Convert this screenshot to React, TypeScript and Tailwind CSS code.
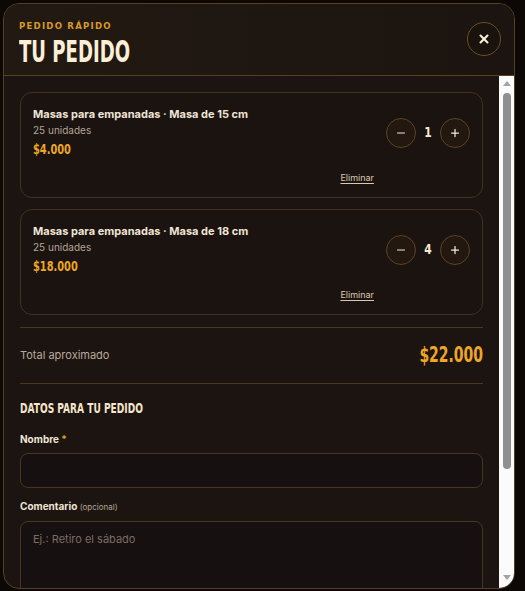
import { Minus, Plus, X } from 'lucide-react';

type CartItem = {
    id: number;
    name: string;
    units: string;
    price: string;
    qty: number;
};

const items: CartItem[] = [
    { id: 1, name: 'Masas para empanadas · Masa de 15 cm', units: '25 unidades', price: '$4.000', qty: 1 },
    { id: 2, name: 'Masas para empanadas · Masa de 18 cm', units: '25 unidades', price: '$18.000', qty: 4 },
];

const display = "font-['DejaVu_Sans_Condensed','DejaVu_Sans',sans-serif] font-bold";

function QtyButton({ children }: { children: React.ReactNode }) {
    return (
        <button className="flex h-[30px] w-[30px] items-center justify-center rounded-full border border-[#5e4424] bg-[#22180f] text-[#f6e9d4]">
            {children}
        </button>
    );
}

// classic browser scrollbar, as it shows in the screenshot
function Scrollbar() {
    return (
        <div className="flex w-[15px] shrink-0 flex-col items-center bg-[#fbfbfb]">
            <svg width="8" height="15" viewBox="0 0 8 15" className="shrink-0">
                <path d="M0 10 L4 5 L8 10 Z" fill="#a3a3a3" />
            </svg>
            <div className="mt-[2px] h-[376px] w-[8px] rounded-full bg-[#8f8f8f]" />
            <div className="flex-1" />
            <svg width="8" height="15" viewBox="0 0 8 15" className="mb-[2px] shrink-0">
                <path d="M0 4 L8 4 L4 9 Z" fill="#a3a3a3" />
            </svg>
        </div>
    );
}

function ItemCard({ item }: { item: CartItem }) {
    return (
        <div className="rounded-xl border border-[#44321e] bg-[#1b130f] px-3 pt-[13px] pb-[13px]">
            <div className="flex items-center justify-between">
                <div>
                    <p className="text-[11px] leading-4 font-bold text-[#efe4d6]">{item.name}</p>
                    <p className="mt-px text-[10px] leading-[14px] text-[#b3a596]">{item.units}</p>
                    <p className={`${display} mt-[2px] origin-left scale-x-[0.78] text-[14px] leading-5 text-[#eda626]`}>
                        {item.price}
                    </p>
                </div>
                <div className="flex items-center">
                    <QtyButton>
                        <Minus className="h-3 w-3" strokeWidth={2} />
                    </QtyButton>
                    <span className={`${display} w-6 origin-center scale-x-[0.85] text-center text-[14px] text-[#f6e9d4]`}>
                        {item.qty}
                    </span>
                    <QtyButton>
                        <Plus className="h-3 w-3" strokeWidth={2.5} />
                    </QtyButton>
                </div>
            </div>
            <div className="mt-[13px] flex justify-end pr-[96px]">
                <button className="text-[9px] leading-3 text-[#d9c9b2] underline underline-offset-2">Eliminar</button>
            </div>
        </div>
    );
}

export default function App() {
    return (
        <div className="h-[591px] w-[525px] overflow-hidden bg-[#0b0806] pt-[3px] pl-[3px] font-['Inter','Noto_Sans',sans-serif]">
            <div className="flex h-[586px] w-[512px] flex-col overflow-hidden rounded-2xl border border-[#58401f] bg-[#1c1410]">
                <header className="flex h-[72px] shrink-0 items-start justify-between border-b border-[#58401f] bg-gradient-to-r from-[#221912] to-[#1c1410] pr-[13px] pl-[15px]">
                    <div className="pt-[16px]">
                        <p className={`${display} text-[9.5px] leading-3 tracking-[0.13em] text-[#d99a2b]`}>PEDIDO RÁPIDO</p>
                        <h1 className={`${display} mt-[4px] origin-left scale-x-[0.67] text-[30px] leading-8 text-[#fbefd8]`}>
                            TU PEDIDO
                        </h1>
                    </div>
                    <button className="mt-[18px] flex h-[34px] w-[34px] items-center justify-center rounded-full border border-[#6b4e29] bg-[#1a120d] text-[#fbefd8]">
                        <X className="h-3.5 w-3.5" strokeWidth={3.5} />
                    </button>
                </header>

                <div className="flex min-h-0 flex-1">
                    <div className="min-w-0 flex-1 overflow-hidden px-4 pt-4">
                        <div className="space-y-[11px]">
                            {items.map((item) => (
                                <ItemCard key={item.id} item={item} />
                            ))}
                        </div>

                        <div className="mt-3 flex h-[57px] items-center justify-between border-y border-[#4c3820]">
                            <span className="text-[11px] text-[#b8aa9b]">Total aproximado</span>
                            <span className={`${display} origin-right scale-x-[0.74] text-[21px] text-[#eda626]`}>$22.000</span>
                        </div>

                        <h2 className={`${display} mt-[14px] origin-left scale-x-[0.72] text-[14px] leading-5 text-[#f6e6cc]`}>
                            DATOS PARA TU PEDIDO
                        </h2>

                        <label className="mt-[15px] block text-[10px] leading-3 font-bold text-[#efe4d6]">
                            Nombre <span className="text-[#e0a030]">*</span>
                        </label>
                        <input className="mt-2 h-[35px] w-full rounded-lg border border-[#4a3620] bg-[#171010] px-3 text-[11px] text-[#efe4d6] outline-none" />

                        <label className="mt-[12px] block text-[10px] leading-3 font-bold text-[#efe4d6]">
                            Comentario <span className="text-[8px] font-normal text-[#b3a596]">(opcional)</span>
                        </label>
                        <textarea
                            rows={4}
                            placeholder="Ej.: Retiro el sábado"
                            className="mt-2 h-[80px] w-full rounded-lg border border-[#4a3620] bg-[#171010] px-3 py-[9px] text-[11px] text-[#efe4d6] outline-none placeholder:text-[#7b6d61]"
                        />
                    </div>
                    <Scrollbar />
                </div>
            </div>
        </div>
    );
}
